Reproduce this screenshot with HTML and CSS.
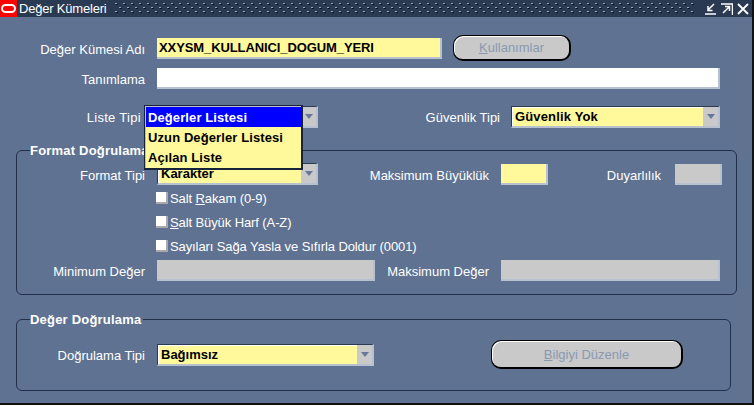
FILE: index.html
```html
<!DOCTYPE html>
<html lang="tr">
<head>
<meta charset="utf-8">
<title>Değer Kümeleri</title>
<link rel="stylesheet" href="styles.css">
</head>
<body>
<div class="window">
  <header class="titlebar">
    <svg class="logo" width="17" height="17" viewBox="0 0 17 17"><rect width="17" height="17" fill="#f00"/><rect x="2" y="5" width="13" height="7" rx="3.5" fill="none" stroke="#fff" stroke-width="2"/></svg>
    <span class="title">Değer Kümeleri</span>
    <svg class="dots" width="580" height="12">
      <defs>
        <pattern id="grip" width="8" height="8" patternUnits="userSpaceOnUse">
          <rect x="0" y="0" width="2" height="1" fill="#9aa6b8"/><rect x="1" y="1" width="2" height="1" fill="#0c1626"/>
          <rect x="4" y="4" width="2" height="1" fill="#9aa6b8"/><rect x="5" y="5" width="2" height="1" fill="#0c1626"/>
        </pattern>
      </defs>
      <rect width="580" height="12" fill="url(#grip)"/>
    </svg>
    <div class="controls">
      <svg width="12" height="12" viewBox="0 0 12 12"><path d="M0 11H11M9 1L3 7M3 3V7.5H7.5" fill="none" stroke="#fff" stroke-width="1.5"/></svg>
      <svg width="12" height="12" viewBox="0 0 12 12"><path d="M0 1H11.5V12M2 10L8 4M4 3.5H8.5V8" fill="none" stroke="#fff" stroke-width="1.5"/></svg>
      <svg width="12" height="12" viewBox="0 0 12 12"><path d="M1 1L11 11M11 1L1 11" fill="none" stroke="#fff" stroke-width="1.8"/></svg>
    </div>
  </header>
  <main class="content">
    <div class="row row-name">
      <label class="label">Değer Kümesi Adı</label>
      <div class="field req name-field">XXYSM_KULLANICI_DOGUM_YERI</div>
      <button class="btn btn-use"><u>K</u>ullanımlar</button>
    </div>
    <div class="row row-desc">
      <label class="label">Tanımlama</label>
      <div class="field white grow"></div>
    </div>
    <div class="row row-type">
      <label class="label list-label">Liste Tipi</label>
      <div class="select list-select"><span class="val"></span><span class="arrow"></span></div>
      <label class="label sec-label">Güvenlik Tipi</label>
      <div class="select sec-select"><span class="val">Güvenlik Yok</span><span class="arrow"></span></div>
      <ul class="menu">
        <li class="sel">Değerler Listesi</li>
        <li>Uzun Değerler Listesi</li>
        <li>Açılan Liste</li>
      </ul>
    </div>
    <section class="group group-format">
      <h2 class="legend">Format Doğrulama</h2>
      <div class="row row-format">
        <label class="label">Format Tipi</label>
        <div class="select format-select"><span class="val">Karakter</span><span class="arrow"></span></div>
        <label class="label max-label">Maksimum Büyüklük</label>
        <div class="field req small"></div>
        <label class="label prec-label">Duyarlılık</label>
        <div class="field gray small"></div>
      </div>
      <div class="check"><span class="box"></span>Salt <u>R</u>akam (0-9)</div>
      <div class="check"><span class="box"></span><u>S</u>alt Büyük Harf (A-Z)</div>
      <div class="check"><span class="box"></span>Sayıları Sağa Yasla ve Sıfırla Doldur (0001)</div>
      <div class="row row-minmax">
        <label class="label">Minimum Değer</label>
        <div class="field gray minmax"></div>
        <label class="label maxv-label">Maksimum Değer</label>
        <div class="field gray minmax-r"></div>
      </div>
    </section>
    <section class="group group-value">
      <h2 class="legend">Değer Doğrulama</h2>
      <div class="row row-valid">
        <label class="label">Doğrulama Tipi</label>
        <div class="select valid-select"><span class="val">Bağımsız</span><span class="arrow"></span></div>
        <button class="btn btn-edit"><u>B</u>ilgiyi Düzenle</button>
      </div>
    </section>
  </main>
</div>
</body>
</html>
```
FILE: styles.css
```css
* { box-sizing: border-box; }
html, body { margin: 0; padding: 0; background: #fff; }
body { width: 754px; height: 406px; overflow: hidden; font-family: "Liberation Sans", sans-serif; font-size: 13px; color: #fff; }
.window { width: 754px; height: 405px; background: #5f7291; border-right: 2px solid #111; border-bottom: 2px solid #111; }
.titlebar { height: 17px; background: #2a3a52; display: flex; align-items: center; }
.logo { flex: none; }
.title { margin-left: 2px; font-size: 13px; letter-spacing: -.2px; width: 96px; white-space: nowrap; }
.dots { display: block; flex: none; }
.controls { margin-left: 10px; display: flex; gap: 4px; }
.controls svg { display: block; }
.content { padding-left: 16px; position: relative; }
.row { display: flex; align-items: center; position: relative; }
.label { flex: none; text-align: right; white-space: nowrap; padding-top: 2px; }
.field { height: 21px; border-right: 2px solid #b7c0cf; border-bottom: 2px solid #b7c0cf; font-weight: bold; color: #000; padding-left: 2px; line-height: 19px; }
.req { background: #fff99c; }
.white { background: #fff; }
.gray { background: #c9c9c9; }
.grow { flex: 1; }
.row-name { height: 26px; margin-top: 18px; }
.row-name .label, .row-desc .label { width: 129px; margin-right: 12px; }
.name-field { width: 285px; letter-spacing: -.1px; }
.btn { font: inherit; background: #c9c9c9; color: #8a99b2; border: 1px solid #000; border-right-width: 2px; border-bottom-width: 2px; border-radius: 10px; box-shadow: inset 1px 1px 0 #fff; padding: 0; }
.btn-use { width: 118px; height: 26px; margin-left: 11px; }
.row-desc { margin-top: 7px; height: 21px; width: 704px; }
.row-type { margin-top: 16px; height: 23px; z-index: 2; }
.list-label { width: 125px; margin-right: 16px; letter-spacing: .3px; }
.select { height: 22px; display: flex; background: #fff99c; border: 1px solid #2a3a52; border-right: 2px solid #b7c0cf; border-bottom: 2px solid #b7c0cf; color: #000; font-weight: bold; }
.select .val { flex: 1; padding-left: 2px; line-height: 18px; border-top: 1px solid #fff; border-left: 1px solid #fff; overflow: hidden; }
.select .arrow { width: 15px; background: #c9c9c9; position: relative; }
.select .arrow::after { content: ""; position: absolute; left: 4px; top: 7px; border-left: 4px solid transparent; border-right: 4px solid transparent; border-top: 5px solid #66789a; }
.list-select { width: 161px; }
.sec-label { width: 182px; margin-right: 11px; }
.sec-select { width: 209px; }
.sec-select .val { letter-spacing: .15px; }
.menu { list-style: none; margin: 0; padding: 1px 0 0 1px; position: absolute; left: 128px; top: 0; width: 159px; height: 65px; background: #fff99c; border: 1px solid #16233a; border-right-width: 2px; border-bottom-width: 2px; box-shadow: inset 1px 1px 0 #b7c0cf; color: #000; font-weight: bold; letter-spacing: .1px; z-index: 3; }
.menu li { height: 20px; line-height: 22px; padding-left: 2px; white-space: nowrap; }
.menu .sel { background: #00f; color: #fff; }
.group { position: relative; border: 1px solid #22304a; border-radius: 6px; }
.legend { position: absolute; left: 13px; top: -8px; margin: 0; padding-right: 2px; background: #5f7291; font-size: 13px; line-height: 16px; font-weight: bold; letter-spacing: .2px; }
.group-format { margin-top: 22px; width: 721px; height: 145px; padding-top: 12px; }
.row-format { height: 22px; }
.row-format > .label:first-child, .row-minmax > .label:first-child { width: 128px; margin-right: 12px; }
.format-select { width: 161px; }
.max-label { width: 171px; margin-right: 12px; }
.small { width: 47px; }
.prec-label { width: 113px; margin-right: 14px; }
.check { height: 24px; margin-left: 139px; display: flex; align-items: center; white-space: pre; letter-spacing: -.1px; }
.box { width: 12px; height: 12px; background: #fff; border-right: 2px solid #a9a9a9; border-bottom: 2px solid #a9a9a9; margin-right: 2px; flex: none; }
.row-format + .check { margin-top: 1px; }
.row-minmax { margin-top: 2px; height: 21px; }
.minmax { width: 218px; }
.maxv-label { width: 114px; margin-right: 12px; }
.minmax-r { width: 219px; }
.group-value { margin-top: 24px; width: 715px; height: 72px; padding-top: 23px; }
.row-valid { height: 23px; }
.row-valid > .label { width: 128px; margin-right: 12px; }
.valid-select { width: 217px; }
.btn-edit { width: 192px; height: 29px; margin-left: 117px; }
```
